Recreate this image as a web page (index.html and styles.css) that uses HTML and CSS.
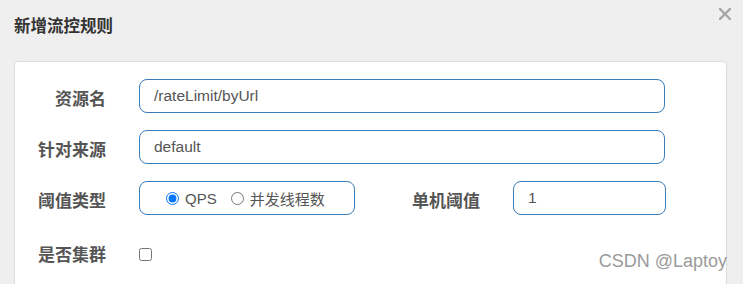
FILE: index.html
```html
<!DOCTYPE html>
<html lang="zh-CN">
<head>
    <meta charset="UTF-8">
    <meta name="viewport" content="width=device-width, initial-scale=1.0">
    <title>新增流控规则</title>
    <link rel="stylesheet" href="styles.css">
</head>
<body>

<div class="dialog">
    <!-- Header -->
    <div class="dialog-header">
        <h3>新增流控规则</h3>
        <span class="close">
            <svg width="12" height="12" viewBox="0 0 12 12">
                <path d="M1 1 L11 11 M11 1 L1 11" stroke="#a6a6a6" stroke-width="2.4" stroke-linecap="square"/>
            </svg>
        </span>
    </div>

    <!-- Form -->
    <div class="panel">
        <div class="row">
            <label class="label">资源名</label>
            <input class="field wide" type="text" value="/rateLimit/byUrl">
        </div>
        <div class="row">
            <label class="label">针对来源</label>
            <input class="field wide" type="text" value="default">
        </div>
        <div class="row">
            <label class="label">阈值类型</label>
            <div class="radio-group">
                <label class="radio"><input type="radio" name="grade" checked>QPS</label>
                <label class="radio"><input type="radio" name="grade">并发线程数</label>
            </div>
            <label class="label label-mid">单机阈值</label>
            <input class="field narrow" type="text" value="1">
        </div>
        <div class="row row-check">
            <label class="label">是否集群</label>
            <input class="check" type="checkbox">
        </div>
    </div>
</div>

<div class="watermark">CSDN @Laptoy</div>

</body>
</html>
```

FILE: styles.css
```css
body {
    margin: 0;
    background-color: #efefef;
    font-family: "Liberation Sans", "Noto Sans CJK SC", sans-serif;
    height: 284px;
    overflow: hidden;
}

.dialog-header {
    display: flex;
    justify-content: space-between;
    align-items: flex-start;
    height: 61px;
    padding: 0 12px 0 14px;
    box-sizing: border-box;
}

.dialog-header h3 {
    margin: 14px 0 0;
    font-size: 16.5px;
    line-height: 22px;
    color: #333;
    font-family: "Noto Sans CJK SC", sans-serif;
    font-weight: bold;
}

.close {
    margin-top: 8px;
    line-height: 0;
}

.panel {
    margin: 0 16px 0 14px;
    background-color: #fff;
    border: 1px solid #dcdcdc;
    border-radius: 4px;
    padding: 17px 0 40px;
}

.row {
    display: flex;
    align-items: center;
    height: 34px;
    margin-bottom: 17px;
}

.row-check {
    margin-top: 20px;
}

.label {
    width: 91px;
    margin-right: 33px;
    text-align: right;
    font-family: "Noto Sans CJK SC", sans-serif;
    font-weight: bold;
    font-size: 17px;
    color: #555;
    padding-top: 3px;
}

.label-mid {
    width: 125px;
}

.field {
    height: 34px;
    box-sizing: border-box;
    border: 1px solid #3b7dbd;
    border-radius: 8px;
    padding: 0 14px;
    font-family: "Liberation Sans", sans-serif;
    font-size: 15.5px;
    color: #555;
    outline: none;
    background: #fff;
}

.wide {
    width: 526px;
}

.narrow {
    width: 153px;
}

.radio-group {
    display: flex;
    align-items: center;
    width: 216px;
    height: 34px;
    box-sizing: border-box;
    border: 1px solid #3b7dbd;
    border-radius: 8px;
    padding-left: 21px;
}

.radio {
    display: flex;
    align-items: center;
    font-size: 15px;
    color: #555;
    margin-right: 9px;
}

.radio input {
    margin: 0 6px 0 5px;
}

.check {
    margin: 4px 0 0 0;
}

.watermark {
    position: absolute;
    right: 16px;
    top: 251px;
    font-family: "Liberation Sans", sans-serif;
    font-size: 18px;
    color: #9a9a9a;
}
```
